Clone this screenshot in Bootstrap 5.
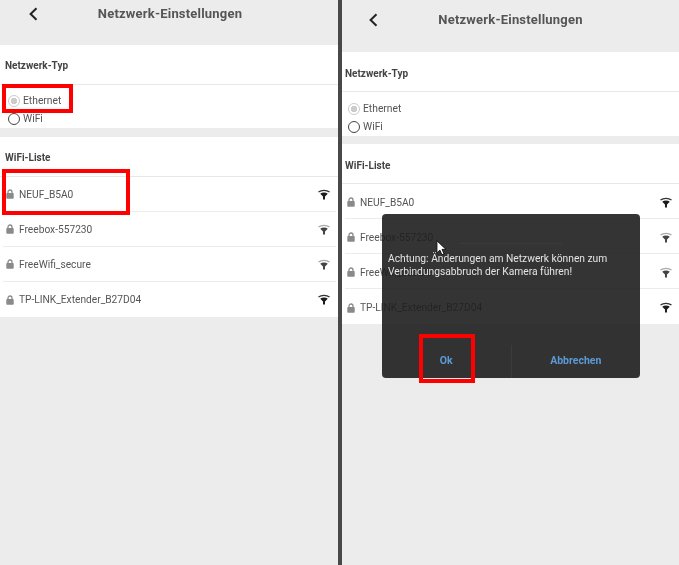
<!DOCTYPE html>
<html lang="de">
<head>
<meta charset="UTF-8">
<title>Netzwerk-Einstellungen</title>
<meta name="viewport" content="width=device-width, initial-scale=1">
<link href="https://cdn.jsdelivr.net/npm/bootstrap@5.3.3/dist/css/bootstrap.min.css" rel="stylesheet">
<style>
  html, body { height: 100%; }
  body { background: #ececec; font-family: Roboto, "Liberation Sans", sans-serif; color: #555; overflow: hidden; }
  .screen { height: 565px; }
  .pane { position: relative; background: #ececec; height: 565px; }
  .pane-left { width: 338px; --inset: 5px; --head: 45px; --head-pad: 27px; --title-top: 2px; --type-h: 43px; --type-top: 7px; --gap: 9px; }
  .pane-right { width: 337px; --inset: 3px; --head: 52px; --head-pad: 40px; --title-top: 3px; --type-h: 44px; --type-top: 8px; --gap: 8px; }
  .split-line { width: 4px; background: #484848; }

  .top-bar { height: var(--head); padding-bottom: calc(var(--head) - var(--head-pad)); position: relative; }
  .top-title { font-size: 13px; font-weight: 700; color: #555; letter-spacing: .2px; line-height: var(--head-pad); }
  .pane-left .top-title { padding-left: 2px; }
  .back-icon { position: absolute; left: 28px; top: calc(var(--head-pad) / 2 - 7px); }
  .pane-right .back-icon { left: 26px; }
  .top-title, .block-title, .type-box, .wifi-row, .alert-text, .alert-btn { filter: blur(.3px); }

  .block { background: #fff; }
  .block + .block { margin-top: var(--gap); }
  .block-title { height: 40px; padding-left: var(--inset); padding-top: var(--title-top); font-size: 10px; font-weight: 700; color: #444; border-bottom: 1px solid #e8e8e8; }
  .type-box { height: var(--type-h); padding: var(--type-top) 0 0 calc(var(--inset) + 3px); font-size: 10.3px; line-height: 18px; }
  .type-row { height: 18px; }
  .radio-dot { width: 12px; height: 12px; margin: 0 3px 0 0; border: 1px solid #444; background: #fff; appearance: none; border-radius: 50%; flex: none; }
  .radio-dot:checked { border-color: #ccc; background: radial-gradient(circle, #ccc 0 3px, #fff 3.5px); }

  .wifi-row { height: 35px; font-size: 10.2px; border-bottom: 1px solid #ececec; }
  .pane-left .wifi-row { margin-left: 3px; margin-right: 2px; padding-left: 3px; padding-right: 6px; }
  .pane-right .wifi-row { margin-left: 3px; padding: 2px 7px 0 2px; }
  .wifi-row:last-child { border-bottom: 0; }
  .wifi-name { padding-top: 1px; }
  .lock-icon { margin-right: 5px; flex: none; }

  .mark-box { position: absolute; border: 4px solid #f00; }
  .mark-eth { left: 2px; top: 84px; width: 71px; height: 29px; }
  .mark-neuf { left: 2px; top: 169px; width: 128px; height: 46px; }
  .mark-ok { left: 77px; top: 334px; width: 56px; height: 49px; }

  .alert-box { position: absolute; left: 40px; top: 214px; width: 258px; height: 164px; background: rgba(30,30,30,.9); border-radius: 4px; color: #e4e4e4; font-size: 10.25px; line-height: 12.5px; }
  .alert-head { height: 30px; margin: 0 78px; border-bottom: 1px solid rgba(255,255,255,.04); }
  .alert-text { height: 101px; padding: 9px 6px 0; }
  .alert-btn { flex: 1 1 0; color: #5b9bd5; font-size: 10.5px; font-weight: 700; height: 33px; }
  .alert-btn + .alert-btn { border-left: 1px solid rgba(255,255,255,.05); }
  .cursor-icon { position: absolute; left: 94px; top: 240px; }
</style>
</head>
<body>

<svg width="0" height="0" class="d-block position-absolute">
  <symbol id="lock" viewBox="0 0 8 10"><path d="M2 4.5V3a2 2 0 0 1 4 0v1.5" fill="none" stroke="#8a8a8a" stroke-width="1.3"/><rect x=".3" y="4" width="7.4" height="5.7" rx=".8" fill="#8a8a8a"/></symbol>
  <symbol id="wifi" viewBox="0 0 12 11"><path d="M.5 3C3.4.7 8.6.7 11.5 3" fill="none" stroke="#333" stroke-width="1.3"/><path d="M2.2 4.7c2.1-1.6 5.5-1.6 7.6 0L7 7.6v2.9H5V7.6z" fill="#1c1c1c"/></symbol>
  <symbol id="wifi-mid" viewBox="0 0 12 11"><path d="M.5 3C3.4.7 8.6.7 11.5 3" fill="none" stroke="#aaa" stroke-width="1.3"/><path d="M2.2 4.7c2.1-1.6 5.5-1.6 7.6 0L7 7.6v2.9H5V7.6z" fill="#444"/></symbol>
  <symbol id="back" viewBox="0 0 10 14"><path d="M8.5 1.2 2.6 7l5.9 5.8" fill="none" stroke="#222" stroke-width="2"/></symbol>
</svg>

<div class="screen d-flex">

  <!-- left screen -->
  <div class="pane pane-left">
    <div class="top-bar text-center">
      <svg class="back-icon" width="10" height="14"><use href="#back"/></svg>
      <div class="top-title">Netzwerk-Einstellungen</div>
    </div>
    <div class="block">
      <div class="block-title d-flex align-items-center">Netzwerk-Typ</div>
      <div class="type-box">
        <div class="type-row d-flex align-items-center"><input class="radio-dot" type="radio" name="typ1" checked>Ethernet</div>
        <div class="type-row d-flex align-items-center"><input class="radio-dot" type="radio" name="typ1">WiFi</div>
      </div>
    </div>
    <div class="block">
      <div class="block-title d-flex align-items-center">WiFi-Liste</div>
      <div class="wifi-row d-flex align-items-center"><svg class="lock-icon" width="8" height="10"><use href="#lock"/></svg><span class="wifi-name flex-grow-1">NEUF_B5A0</span><svg width="12" height="11"><use href="#wifi"/></svg></div>
      <div class="wifi-row d-flex align-items-center"><svg class="lock-icon" width="8" height="10"><use href="#lock"/></svg><span class="wifi-name flex-grow-1">Freebox-557230</span><svg width="12" height="11"><use href="#wifi-mid"/></svg></div>
      <div class="wifi-row d-flex align-items-center"><svg class="lock-icon" width="8" height="10"><use href="#lock"/></svg><span class="wifi-name flex-grow-1">FreeWifi_secure</span><svg width="12" height="11"><use href="#wifi-mid"/></svg></div>
      <div class="wifi-row d-flex align-items-center"><svg class="lock-icon" width="8" height="10"><use href="#lock"/></svg><span class="wifi-name flex-grow-1">TP-LINK_Extender_B27D04</span><svg width="12" height="11"><use href="#wifi"/></svg></div>
    </div>
    <div class="mark-box mark-eth"></div>
    <div class="mark-box mark-neuf"></div>
  </div>

  <div class="split-line"></div>

  <!-- right screen -->
  <div class="pane pane-right">
    <div class="top-bar text-center">
      <svg class="back-icon" width="10" height="14"><use href="#back"/></svg>
      <div class="top-title">Netzwerk-Einstellungen</div>
    </div>
    <div class="block">
      <div class="block-title d-flex align-items-center">Netzwerk-Typ</div>
      <div class="type-box">
        <div class="type-row d-flex align-items-center"><input class="radio-dot" type="radio" name="typ2" checked>Ethernet</div>
        <div class="type-row d-flex align-items-center"><input class="radio-dot" type="radio" name="typ2">WiFi</div>
      </div>
    </div>
    <div class="block">
      <div class="block-title d-flex align-items-center">WiFi-Liste</div>
      <div class="wifi-row d-flex align-items-center"><svg class="lock-icon" width="8" height="10"><use href="#lock"/></svg><span class="wifi-name flex-grow-1">NEUF_B5A0</span><svg width="12" height="11"><use href="#wifi"/></svg></div>
      <div class="wifi-row d-flex align-items-center"><svg class="lock-icon" width="8" height="10"><use href="#lock"/></svg><span class="wifi-name flex-grow-1">Freebox-557230</span><svg width="12" height="11"><use href="#wifi-mid"/></svg></div>
      <div class="wifi-row d-flex align-items-center"><svg class="lock-icon" width="8" height="10"><use href="#lock"/></svg><span class="wifi-name flex-grow-1">FreeWifi_secure</span><svg width="12" height="11"><use href="#wifi-mid"/></svg></div>
      <div class="wifi-row d-flex align-items-center"><svg class="lock-icon" width="8" height="10"><use href="#lock"/></svg><span class="wifi-name flex-grow-1">TP-LINK_Extender_B27D04</span><svg width="12" height="11"><use href="#wifi"/></svg></div>
    </div>

    <div class="alert-box d-flex flex-column">
      <div class="alert-head"></div>
      <div class="alert-text">Achtung: Änderungen am Netzwerk können zum Verbindungsabbruch der Kamera führen!</div>
      <div class="d-flex">
        <div class="alert-btn d-flex align-items-center justify-content-center">Ok</div>
        <div class="alert-btn d-flex align-items-center justify-content-center">Abbrechen</div>
      </div>
    </div>
    <svg class="cursor-icon" width="11" height="16" viewBox="0 0 10 15"><path d="M.7.7v11.4l2.8-2.6 1.9 4.4 2-.9-1.9-4.2h3.7z" fill="#fff" stroke="#111" stroke-width=".9"/></svg>
    <div class="mark-box mark-ok"></div>
  </div>
</div>

<script src="https://cdn.jsdelivr.net/npm/bootstrap@5.3.3/dist/js/bootstrap.bundle.min.js"></script>
</body>
</html>
